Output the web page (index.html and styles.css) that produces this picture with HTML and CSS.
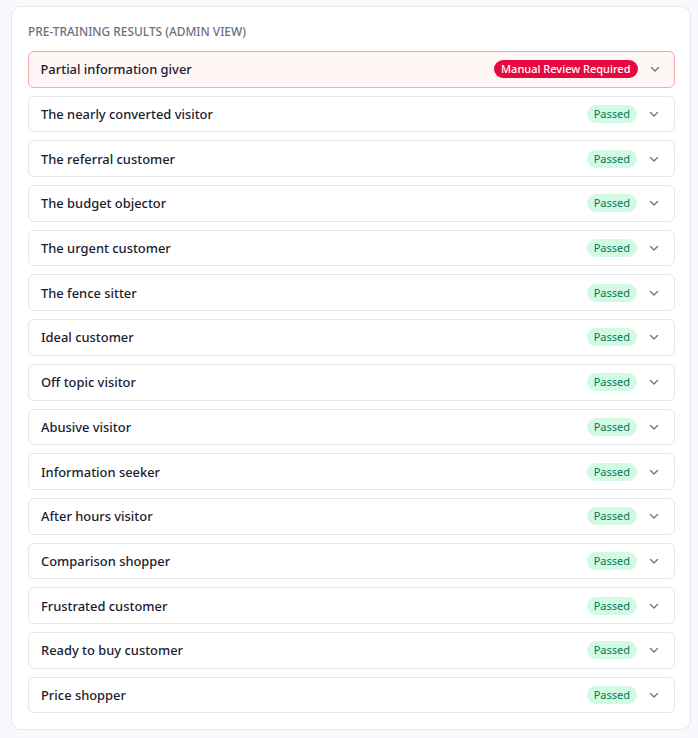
FILE: index.html
```html
<!DOCTYPE html>
<html>
<head>
<meta charset="utf-8">
<link rel="stylesheet" href="styles.css">
</head>
<body>
<div class="card">
  <div class="heading">Pre-training results (admin view)</div>
  <div class="list">
    <div class="row row-alert"><span class="name">Partial information giver</span><span class="badge badge-red">Manual Review Required</span><svg class="chev" viewBox="0 0 12 12"><path d="M2.5 4.5 L6 8 L9.5 4.5"/></svg></div>
    <div class="row"><span class="name">The nearly converted visitor</span><span class="badge badge-green">Passed</span><svg class="chev" viewBox="0 0 12 12"><path d="M2.5 4.5 L6 8 L9.5 4.5"/></svg></div>
    <div class="row"><span class="name">The referral customer</span><span class="badge badge-green">Passed</span><svg class="chev" viewBox="0 0 12 12"><path d="M2.5 4.5 L6 8 L9.5 4.5"/></svg></div>
    <div class="row"><span class="name">The budget objector</span><span class="badge badge-green">Passed</span><svg class="chev" viewBox="0 0 12 12"><path d="M2.5 4.5 L6 8 L9.5 4.5"/></svg></div>
    <div class="row"><span class="name">The urgent customer</span><span class="badge badge-green">Passed</span><svg class="chev" viewBox="0 0 12 12"><path d="M2.5 4.5 L6 8 L9.5 4.5"/></svg></div>
    <div class="row"><span class="name">The fence sitter</span><span class="badge badge-green">Passed</span><svg class="chev" viewBox="0 0 12 12"><path d="M2.5 4.5 L6 8 L9.5 4.5"/></svg></div>
    <div class="row"><span class="name">Ideal customer</span><span class="badge badge-green">Passed</span><svg class="chev" viewBox="0 0 12 12"><path d="M2.5 4.5 L6 8 L9.5 4.5"/></svg></div>
    <div class="row"><span class="name">Off topic visitor</span><span class="badge badge-green">Passed</span><svg class="chev" viewBox="0 0 12 12"><path d="M2.5 4.5 L6 8 L9.5 4.5"/></svg></div>
    <div class="row"><span class="name">Abusive visitor</span><span class="badge badge-green">Passed</span><svg class="chev" viewBox="0 0 12 12"><path d="M2.5 4.5 L6 8 L9.5 4.5"/></svg></div>
    <div class="row"><span class="name">Information seeker</span><span class="badge badge-green">Passed</span><svg class="chev" viewBox="0 0 12 12"><path d="M2.5 4.5 L6 8 L9.5 4.5"/></svg></div>
    <div class="row"><span class="name">After hours visitor</span><span class="badge badge-green">Passed</span><svg class="chev" viewBox="0 0 12 12"><path d="M2.5 4.5 L6 8 L9.5 4.5"/></svg></div>
    <div class="row"><span class="name">Comparison shopper</span><span class="badge badge-green">Passed</span><svg class="chev" viewBox="0 0 12 12"><path d="M2.5 4.5 L6 8 L9.5 4.5"/></svg></div>
    <div class="row"><span class="name">Frustrated customer</span><span class="badge badge-green">Passed</span><svg class="chev" viewBox="0 0 12 12"><path d="M2.5 4.5 L6 8 L9.5 4.5"/></svg></div>
    <div class="row"><span class="name">Ready to buy customer</span><span class="badge badge-green">Passed</span><svg class="chev" viewBox="0 0 12 12"><path d="M2.5 4.5 L6 8 L9.5 4.5"/></svg></div>
    <div class="row"><span class="name">Price shopper</span><span class="badge badge-green">Passed</span><svg class="chev" viewBox="0 0 12 12"><path d="M2.5 4.5 L6 8 L9.5 4.5"/></svg></div>
  </div>
</div>
</body>
</html>
```
FILE: styles.css
```css
html, body {
  margin: 0;
  padding: 0;
  background: #f8f9fc;
}
body {
  padding: 6px 7px 9px 11px;
  font-family: "Noto Sans", "Open Sans", sans-serif;
  color: #111827;
}
.card {
  background: #ffffff;
  border: 1px solid #e3e6ec;
  border-radius: 10px;
  padding: 16px 15px 16px 16px;
}
.heading {
  font-size: 11.9px;
  line-height: 16px;
  font-weight: 500;
  text-transform: uppercase;
  color: #6b7280;
  margin-bottom: 12px;
}
.list {
  display: flex;
  flex-direction: column;
  gap: 8px;
}
.row {
  display: flex;
  align-items: center;
  height: 36.7px;
  box-sizing: border-box;
  padding: 0 14px 0 12px;
  border: 1px solid #e2e5ea;
  border-radius: 6px;
  background: #ffffff;
}
.row-alert {
  border: 1.5px solid #fca5b1;
  background: #fff6f6;
  padding-left: 11.5px;
  padding-right: 13.5px;
}
.name {
  flex: 1;
  font-size: 12.9px;
  font-weight: 500;
  color: #1a2030;
}
.badge {
  font-size: 11px;
  line-height: 18px;
  padding: 0 7px;
  border-radius: 9px;
  margin-right: 11px;
}
.badge-red {
  background: #e8083e;
  color: #ffffff;
  font-weight: 500;
}
.badge-green {
  background: #d1fae5;
  color: #047857;
}
.chev {
  width: 12px;
  height: 12px;
  fill: none;
  stroke: #6b7280;
  stroke-width: 1.3;
  stroke-linecap: round;
  stroke-linejoin: round;
}
```
